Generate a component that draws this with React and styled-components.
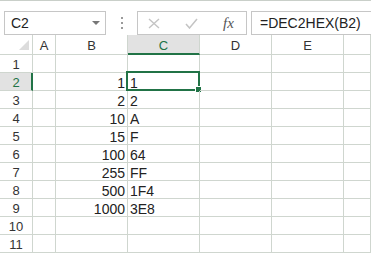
import React from 'react'
import styled, { createGlobalStyle } from 'styled-components';

const GlobalStyle = createGlobalStyle`
  html, body { margin: 0; padding: 0; background: #fff; }
  body { font-family: "Liberation Sans", Arial, sans-serif; }
`;

const GRID = '#cfd6cf';
const GREEN = '#217346';

const cols = ['A', 'B', 'C', 'D', 'E', ''];
const rows = [
  { b: '', c: '' },
  { b: '1', c: '1' },
  { b: '2', c: '2' },
  { b: '10', c: 'A' },
  { b: '15', c: 'F' },
  { b: '100', c: '64' },
  { b: '255', c: 'FF' },
  { b: '500', c: '1F4' },
  { b: '1000', c: '3E8' },
  { b: '', c: '' },
  { b: '', c: '' },
];

function App() {
  return (
    <Page>
      <GlobalStyle />
      <Toolbar>
        <NameBox>
          <span>C2</span>
          <Caret />
        </NameBox>
        <Grip>
          <i /><i /><i />
        </Grip>
        <ActionBox>
          <IconSlot>
            <svg width="12" height="11" viewBox="0 0 12 11">
              <path d="M1 1 L11 10 M11 1 L1 10" stroke="#c4c4c4" strokeWidth="1.4" fill="none" />
            </svg>
          </IconSlot>
          <IconSlot>
            <svg width="13" height="11" viewBox="0 0 13 11">
              <path d="M1 6 L4.5 10 L12 1" stroke="#c4c4c4" strokeWidth="1.5" fill="none" />
            </svg>
          </IconSlot>
          <Fx>fx</Fx>
        </ActionBox>
        <FormulaBox>=DEC2HEX(B2)</FormulaBox>
      </Toolbar>
      <Sheet>
        <Corner><Tri /></Corner>
        {cols.map((c, i) => (
          <ColHead key={i} active={c === 'C'}>{c}</ColHead>
        ))}
        {rows.map((r, i) => {
          const n = i + 1;
          return (
            <React.Fragment key={n}>
              <RowHead active={n === 2}>{n}</RowHead>
              <Cell />
              <Cell align="right">{r.b}</Cell>
              <Cell>
                {r.c}
                {n === 2 && <Selection><Handle /></Selection>}
              </Cell>
              <Cell />
              <Cell />
              <Cell />
            </React.Fragment>
          );
        })}
      </Sheet>
    </Page>
  );
}

const Page = styled.div`
  width: 371px;
  height: 253px;
  overflow: hidden;
  display: flex;
  flex-direction: column;
`;

const Toolbar = styled.div`
  height: 43px;
  box-sizing: border-box;
  border-top: 1px solid #c9cfc9;
  padding: 10px 0 0 4px;
  display: flex;
  align-items: flex-start;
`;

const NameBox = styled.div`
  width: 102px;
  height: 24px;
  box-sizing: border-box;
  border: 1px solid #c6c6c6;
  display: flex;
  align-items: center;
  justify-content: space-between;
  padding: 0 5px 0 6px;
  font-size: 14px;
  color: #222;
`;

const Caret = styled.div`
  width: 0;
  height: 0;
  border-left: 4px solid transparent;
  border-right: 4px solid transparent;
  border-top: 4px solid #777;
`;

const Grip = styled.div`
  width: 31px;
  height: 24px;
  display: flex;
  flex-direction: column;
  align-items: center;
  justify-content: center;
  gap: 3px;
  i {
    width: 2px;
    height: 2px;
    background: #9a9a9a;
  }
`;

const ActionBox = styled.div`
  width: 110px;
  height: 24px;
  box-sizing: border-box;
  border: 1px solid #c6c6c6;
  display: flex;
  align-items: center;
  padding-left: 10px;
`;

const IconSlot = styled.div`
  width: 37px;
  display: flex;
  align-items: center;
`;

const Fx = styled.div`
  font-family: "Liberation Serif", serif;
  font-style: italic;
  font-size: 15px;
  color: #555;
  margin-left: 1px;
`;

const FormulaBox = styled.div`
  flex: 1;
  margin-left: 4px;
  height: 24px;
  box-sizing: border-box;
  border: 1px solid #c6c6c6;
  border-right: none;
  padding-left: 8px;
  font-size: 14px;
  line-height: 22px;
  color: #222;
  white-space: nowrap;
`;

const Sheet = styled.div`
  display: grid;
  grid-template-columns: 33px 23px 72px 72px 72px 72px 1fr;
  grid-template-rows: 20px repeat(11, 18px);
  font-size: 14px;
  color: #222;
`;

const Corner = styled.div`
  position: relative;
  box-sizing: border-box;
  border-right: 1px solid ${GRID};
  border-bottom: 1px solid ${GRID};
`;

const Tri = styled.div`
  position: absolute;
  right: 3px;
  bottom: 4px;
  width: 0;
  height: 0;
  border-left: 10px solid transparent;
  border-bottom: 10px solid #dcdcdc;
`;

const ColHead = styled.div`
  box-sizing: border-box;
  border-right: 1px solid ${GRID};
  border-bottom: ${p => (p.active ? `2px solid ${GREEN}` : `1px solid ${GRID}`)};
  background: ${p => (p.active ? '#e2e2e2' : '#fff')};
  color: ${p => (p.active ? GREEN : '#333')};
  display: flex;
  align-items: center;
  justify-content: center;
  padding-top: ${p => (p.active ? '2px' : '1px')};
  font-size: 13px;
`;

const RowHead = styled.div`
  box-sizing: border-box;
  border-right: ${p => (p.active ? `2px solid ${GREEN}` : `1px solid ${GRID}`)};
  border-bottom: 1px solid ${GRID};
  background: ${p => (p.active ? '#e2e2e2' : '#fff')};
  color: ${p => (p.active ? GREEN : '#333')};
  display: flex;
  align-items: center;
  justify-content: center;
  padding: 2px 0 0 ${p => (p.active ? '1px' : '0')};
  font-size: 13px;
`;

const Cell = styled.div`
  position: relative;
  box-sizing: border-box;
  border-right: 1px solid ${GRID};
  border-bottom: 1px solid ${GRID};
  display: flex;
  align-items: center;
  justify-content: ${p => (p.align === 'right' ? 'flex-end' : 'flex-start')};
  padding: 2px 2px 0 2px;
  white-space: nowrap;
`;

const Selection = styled.div`
  position: absolute;
  left: -2px;
  top: -2px;
  right: -1px;
  bottom: -1px;
  border: 2px solid ${GREEN};
  pointer-events: none;
`;

const Handle = styled.div`
  position: absolute;
  right: -4px;
  bottom: -4px;
  width: 5px;
  height: 5px;
  background: ${GREEN};
  border: 1px solid #fff;
`;

export default App;
